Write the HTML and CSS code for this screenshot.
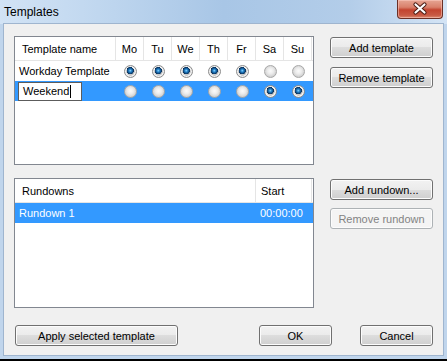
FILE: index.html
```html
<!DOCTYPE html>
<html lang="en">
<head>
  <meta charset="UTF-8">
  <title>Templates</title>
  <link rel="stylesheet" href="styles.css">
</head>
<body>
  <div class="window">
    <div class="titlebar">
      <span class="title">Templates</span>
      <div class="close">
        <svg width="46" height="19" viewBox="0 0 46 19">
          <path d="M18.5 5.5 L27.5 13.5 M27.5 5.5 L18.5 13.5" stroke="#4b1c14" stroke-width="4.2" stroke-linecap="round"/>
          <path d="M18.5 5.5 L27.5 13.5 M27.5 5.5 L18.5 13.5" stroke="#fff" stroke-width="2.2" stroke-linecap="round"/>
        </svg>
      </div>
    </div>

    <div class="client">
      <div class="section">
        <div class="list templates">
          <div class="days head">
            <div class="name">Template name</div>
            <div>Mo</div><div>Tu</div><div>We</div><div>Th</div><div>Fr</div><div>Sa</div><div>Su</div>
          </div>
          <div class="days row">
            <div class="name">Workday Template</div>
            <div><span class="radio on"></span></div>
            <div><span class="radio on"></span></div>
            <div><span class="radio on"></span></div>
            <div><span class="radio on"></span></div>
            <div><span class="radio on"></span></div>
            <div><span class="radio"></span></div>
            <div><span class="radio"></span></div>
          </div>
          <div class="days row selected">
            <div class="name"><span class="editor">Weekend<span class="caret"></span></span></div>
            <div><span class="radio"></span></div>
            <div><span class="radio"></span></div>
            <div><span class="radio"></span></div>
            <div><span class="radio"></span></div>
            <div><span class="radio"></span></div>
            <div><span class="radio on"></span></div>
            <div><span class="radio on"></span></div>
          </div>
        </div>
        <div class="side">
          <button class="btn">Add template</button>
          <button class="btn">Remove template</button>
        </div>
      </div>

      <div class="section second">
        <div class="list rundowns">
          <div class="runs head">
            <div class="name">Rundowns</div>
            <div class="start">Start</div>
          </div>
          <div class="runs row selected">
            <div class="name">Rundown 1</div>
            <div class="start">00:00:00</div>
          </div>
        </div>
        <div class="side tight">
          <button class="btn">Add rundown...</button>
          <button class="btn" disabled>Remove rundown</button>
        </div>
      </div>

      <div class="footer">
        <button class="btn apply">Apply selected template</button>
        <button class="btn ok">OK</button>
        <button class="btn cancel">Cancel</button>
      </div>
    </div>
  </div>
</body>
</html>
```

FILE: styles.css
```css
body {
  margin: 0;
  background-color: #000;
  font-family: "Liberation Sans", Arial, sans-serif;
  font-size: 11px;
  color: #000;
}

.window {
  width: 447px;
  height: 359px;
  display: flex;
  flex-direction: column;
  background-color: #c0d5ec;
}

.titlebar {
  height: 24px;
  display: flex;
  align-items: flex-start;
  padding: 0 4px;
  background: linear-gradient(90deg, #d2e3f5 0%, #c0d7ef 22%, #a8c6e6 50%, #b3cde9 78%, #d4e4f5 100%);
}

.title {
  line-height: 25px;
  font-size: 12px;
}

.close {
  margin-left: auto;
  width: 46px;
  height: 19px;
  box-sizing: border-box;
  border: 1px solid #6b3026;
  border-top: none;
  border-radius: 0 0 4px 4px;
  background: linear-gradient(#e6a593 0%, #d9806b 40%, #c3442f 55%, #c85a44 85%, #dc8c72 100%);
  box-shadow: inset 0 0 0 1px rgba(255, 210, 200, 0.5);
}

.close svg {
  display: block;
  margin: -1px 0 0 -1px;
}

.client {
  flex: 1;
  margin: 0 4px 4px;
  padding: 12px 10px 9px;
  display: flex;
  flex-direction: column;
  background-color: #f0f0f0;
  box-shadow: 0 0 0 1px #9fb5cf;
}

.section {
  display: flex;
  gap: 16px;
}

.section.second {
  margin-top: 13px;
}

.list {
  width: 300px;
  box-sizing: border-box;
  border: 1px solid #828790;
  background-color: #fff;
}

.templates {
  height: 129px;
}

.rundowns {
  height: 130px;
}

.days {
  display: grid;
  grid-template-columns: 101px repeat(7, 28px);
}

.runs {
  display: grid;
  grid-template-columns: 241px 56px;
}

.head {
  height: 24px;
  box-sizing: border-box;
  border-bottom: 1px solid #e5e5e5;
}

.head > div {
  display: flex;
  align-items: center;
  justify-content: center;
  border-right: 1px solid #e5e5e5;
}

.head .name {
  justify-content: flex-start;
  padding-left: 7px;
}

.head .start {
  justify-content: flex-start;
  padding-left: 5px;
}

.row {
  height: 20px;
}

.row > div {
  display: flex;
  align-items: center;
  justify-content: center;
}

.row .name {
  justify-content: flex-start;
  padding-left: 4px;
}

.row .start {
  justify-content: flex-start;
  padding-left: 4px;
}

.selected {
  background-color: #3399ff;
  color: #fff;
}

.editor {
  display: flex;
  align-items: center;
  width: 64px;
  height: 19px;
  box-sizing: border-box;
  margin-left: -1px;
  padding-left: 4px;
  border: 1px solid #5c5c5c;
  background-color: #fff;
  color: #000;
}

.caret {
  display: inline-block;
  width: 1px;
  height: 13px;
  margin-left: 1px;
  background-color: #000;
}

.radio {
  width: 13px;
  height: 13px;
  box-sizing: border-box;
  border-radius: 50%;
  border: 1px solid #a8a8a8;
  background: radial-gradient(circle at 50% 45%, #fbfbfb 0, #ececec 3px, #d9d9d9 5px, #cfcfcf 6px);
}

.radio.on {
  border-color: #8c8c8c;
  background:
    radial-gradient(circle at 48% 42%, #8fd7ff 0, #2a8ad0 1.3px, #11518a 2.6px, #0b2f55 3.5px, transparent 3.8px),
    radial-gradient(circle, #c9c9c9 0 4px, #f6f6f6 4.5px, #e2e2e2 6px);
}

.side {
  width: 103px;
  display: flex;
  flex-direction: column;
  gap: 9px;
  padding-top: 1px;
}

.side.tight {
  gap: 8px;
}

.btn {
  height: 21px;
  box-sizing: border-box;
  padding: 0;
  border: 1px solid #707070;
  border-radius: 3px;
  background: linear-gradient(#f2f2f2 0%, #ebebeb 50%, #dddddd 50%, #cfcfcf 100%);
  box-shadow: inset 0 0 0 1px #fcfcfc;
  font-family: inherit;
  font-size: 11px;
  color: #000;
}

.btn:disabled {
  border-color: #adb2b5;
  background: #f4f4f4;
  color: #838383;
}

.footer {
  display: flex;
  margin-top: auto;
}

.apply {
  width: 163px;
  margin-left: 1px;
}

.ok {
  width: 73px;
  margin-left: auto;
}

.cancel {
  width: 73px;
  margin-left: 28px;
}
```
